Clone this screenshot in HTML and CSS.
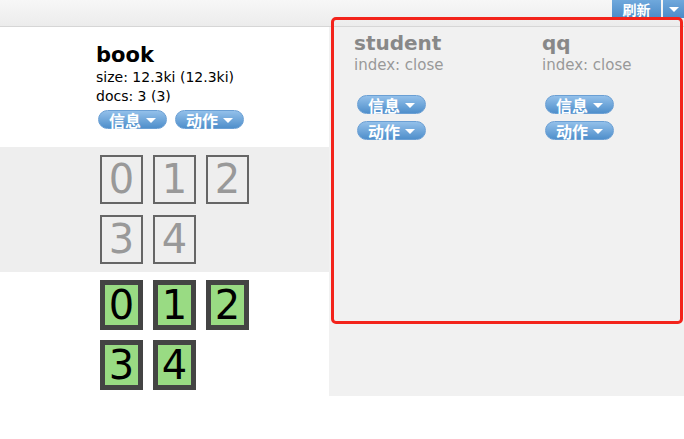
FILE: index.html
```html
<!DOCTYPE html>
<html>
<head>
<meta charset="utf-8">
<link rel="stylesheet" href="styles.css">
</head>
<body>
<div class="topbar">
  <div class="refresh"><span class="rbtn">刷新</span><span class="rdrop"><i class="caret"></i></span></div>
</div>
<div class="main">
  <div class="left">
    <div class="head">
      <div class="title">book</div>
      <div class="meta">size: 12.3ki (12.3ki)</div>
      <div class="meta">docs: 3 (3)</div>
      <div class="btns row">
        <span class="pill">信息<i class="caret"></i></span>
        <span class="pill">动作<i class="caret"></i></span>
      </div>
    </div>
    <div class="shards gray">
      <div class="grid">
        <span class="box">0</span><span class="box">1</span><span class="box">2</span>
        <span class="box">3</span><span class="box">4</span>
      </div>
    </div>
    <div class="shards">
      <div class="grid">
        <span class="box on">0</span><span class="box on">1</span><span class="box on">2</span>
        <span class="box on">3</span><span class="box on">4</span>
      </div>
    </div>
  </div>
  <div class="right">
    <div class="closed">
      <div class="title dim">student</div>
      <div class="meta dim2">index: close</div>
      <div class="btns col">
        <span class="pill">信息<i class="caret"></i></span>
        <span class="pill">动作<i class="caret"></i></span>
      </div>
    </div>
    <div class="closed">
      <div class="title dim">qq</div>
      <div class="meta dim2">index: close</div>
      <div class="btns col">
        <span class="pill">信息<i class="caret"></i></span>
        <span class="pill">动作<i class="caret"></i></span>
      </div>
    </div>
  </div>
</div>
<div class="highlight"></div>
</body>
</html>
```
FILE: styles.css
```css
* { box-sizing: border-box; }
html, body { margin: 0; padding: 0; background: #fff; }
body {
  font-family: "DejaVu Sans", Verdana, "Noto Sans CJK SC", sans-serif;
  color: #000;
  width: 684px;
  height: 439px;
  overflow: hidden;
  position: relative;
}
.topbar {
  height: 27px;
  background: linear-gradient(#f7f7f7, #ececec);
  border-bottom: 1px solid #d6d6d6;
  display: flex;
  justify-content: flex-end;
  align-items: flex-start;
}
.refresh { display: flex; height: 18px; }
.rbtn {
  width: 49px;
  height: 18px;
  background: linear-gradient(#6fa8dc, #4c8bc8);
  color: #fff;
  font-weight: bold;
  font-size: 14px;
  line-height: 18px;
  text-align: center;
  margin-right: 2px;
  font-family: "Noto Sans CJK SC", sans-serif;
}
.rdrop {
  width: 21px;
  height: 18px;
  background: linear-gradient(#6fa8dc, #4c8bc8);
  display: flex;
  align-items: center;
  justify-content: center;
}
.caret {
  display: inline-block;
  width: 0; height: 0;
  border-left: 5px solid transparent;
  border-right: 5px solid transparent;
  border-top: 5px solid #fff;
}
.main { display: flex; align-items: flex-start; }
.left { width: 329px; flex: none; }
.head { height: 120px; padding: 15px 0 0 96px; }
.title { font-size: 21px; font-weight: bold; line-height: 26px; }
.meta { font-size: 14px; line-height: 19px; }
.btns { display: flex; }
.btns.row { gap: 8px; margin-top: 4px; margin-left: 2px; }
.btns.col { flex-direction: column; gap: 7px; margin-top: 20px; margin-left: 3px; }
.pill {
  width: 69px;
  height: 19px;
  border-radius: 10px;
  border: 1px solid #6a9fd4;
  background: linear-gradient(#93c0ea, #4f8fcb);
  color: #fff;
  font-family: "Noto Sans CJK SC", sans-serif;
  font-weight: bold;
  font-size: 16px;
  line-height: 19px;
  display: flex;
  align-items: flex-start;
  padding-left: 10px;
  gap: 5px;
}
.pill .caret { margin-top: 7px; }
.shards { padding: 8px 0 8px 100px; }
.shards.gray { background: #eeeeee; height: 125px; }
.grid { display: grid; grid-template-columns: repeat(3, 43px); grid-auto-rows: 49px; column-gap: 10px; row-gap: 11px; }
.shards:not(.gray) .grid { grid-auto-rows: 50px; row-gap: 10px; }
.box {
  border: 2px solid #666;
  color: #999;
  font-size: 40px;
  line-height: 45px;
  text-align: center;
}
.box.on {
  border: 5px solid #444;
  background: #99db83;
  color: #000;
  line-height: 40px;
}
.right {
  flex: 1;
  height: 369px;
  background: #f1f1f1;
  display: flex;
  padding-top: 3px;
}
.closed { width: 188px; padding-left: 25px; }
.dim { color: #888; font-size: 20px; }
.dim2 { color: #999; font-size: 15px; }
.highlight {
  position: absolute;
  left: 331px;
  top: 17px;
  width: 352px;
  height: 307px;
  border: 3px solid #f3231b;
  border-radius: 5px;
}
```
